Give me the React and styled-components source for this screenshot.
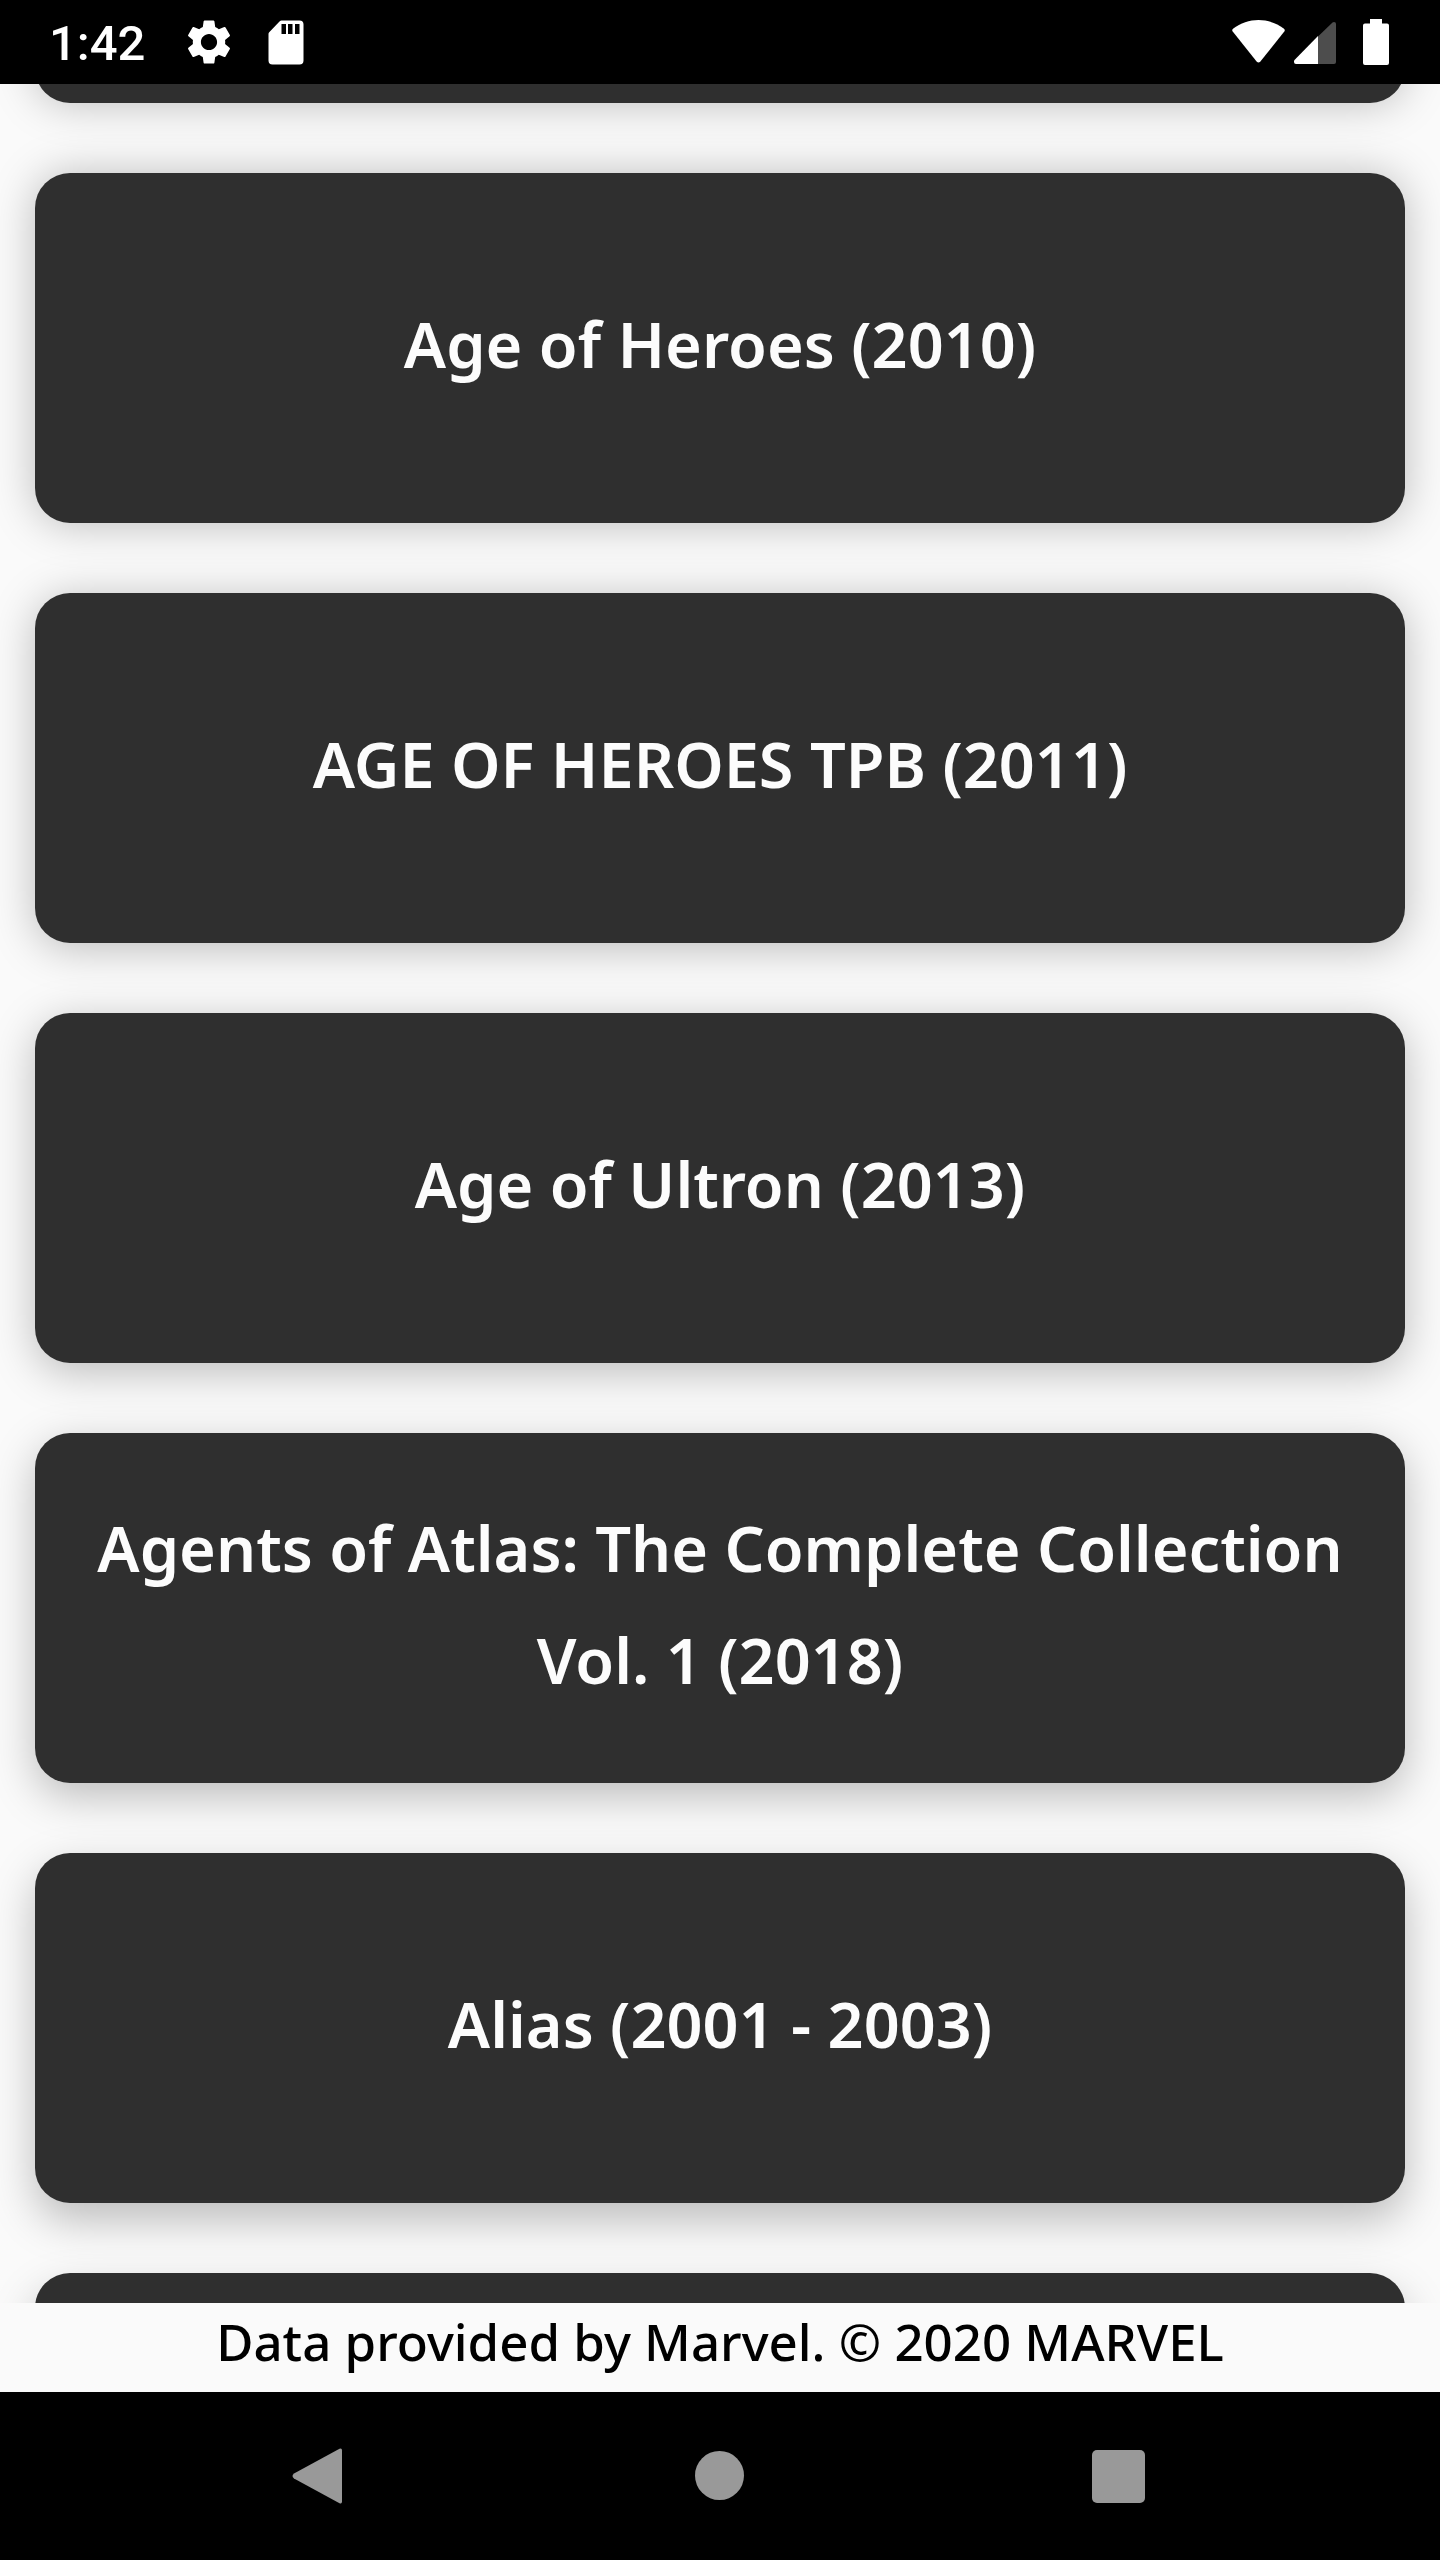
import React, { useLayoutEffect, useRef } from "react";
import styled, { createGlobalStyle } from "styled-components";

const GlobalStyle = createGlobalStyle`
  * { box-sizing: border-box; }
  body { margin: 0; background: #fafafa; }
`;

const Screen = styled.div`
  display: flex;
  flex-direction: column;
  height: 100vh;
  background: #fafafa;
  font-family: "Noto Sans", "Open Sans", sans-serif;
`;

const StatusBar = styled.header`
  display: flex;
  flex: none;
  align-items: center;
  justify-content: space-between;
  height: 84px;
  padding: 0 51px 0 49px;
  background: #000;
  color: #fff;
`;

const StatusGroup = styled.div`
  display: flex;
  align-items: center;
  gap: ${({ $gap }) => $gap}px;
`;

const Clock = styled.time`
  padding-top: 4px;
  font: 500 49px/56px Roboto, sans-serif;
`;

const StatusIcon = styled.svg`
  display: block;
  flex: none;
`;

const SeriesList = styled.ul`
  display: flex;
  flex: 1;
  flex-direction: column;
  gap: 70px;
  min-height: 0;
  margin: 0;
  padding: 35px;
  overflow-y: auto;
  scrollbar-width: none;
  list-style: none;
`;

const SeriesItem = styled.li`
  flex: none;
  height: 350px;
  border-radius: 35px;
  background: #2f2f2f;
  box-shadow: 0 ${({ $depth }) => $depth}px 44px rgba(0, 0, 0, 0.25);
`;

const SeriesButton = styled.button`
  display: flex;
  align-items: center;
  justify-content: center;
  width: 100%;
  height: 100%;
  padding: 0 48px 8px;
  border: 0;
  border-radius: 35px;
  background: none;
  color: #fcfcfc;
  font: inherit;
  font-size: 63px;
  font-weight: 600;
  line-height: 112px;
  text-align: center;
  cursor: pointer;
`;

const Attribution = styled.footer`
  flex: none;
  padding: 0 35px 12px;
  background: #fafafa;
  color: #000;
  font-size: 51px;
  font-weight: 500;
  line-height: 77px;
  text-align: center;
`;

const NavBar = styled.nav`
  display: flex;
  flex: none;
  height: 168px;
  padding: 0 120px;
  background: #000;
`;

const NavButton = styled.button`
  display: flex;
  flex: 1;
  align-items: center;
  justify-content: center;
  padding: 0;
  border: 0;
  background: none;
  cursor: pointer;
`;

const series = [
  { id: 1, depth: 0 },
  { id: 2, depth: 1, title: "Age of Heroes (2010)" },
  { id: 3, depth: 5, title: "AGE OF HEROES TPB (2011)" },
  { id: 4, depth: 9, title: "Age of Ultron (2013)" },
  { id: 5, depth: 13, title: "Agents of Atlas: The Complete Collection Vol. 1 (2018)" },
  { id: 6, depth: 17, title: "Alias (2001 - 2003)" },
  { id: 7, depth: 20 },
];

const SCROLL_OFFSET = 366;

export default function App() {
  const listRef = useRef(null);

  useLayoutEffect(() => {
    listRef.current.scrollTop = SCROLL_OFFSET;
  }, []);

  return (
    <Screen>
      <GlobalStyle />
      <StatusBar>
        <StatusGroup $gap={37}>
          <Clock>1:42</Clock>
          <StatusGroup $gap={28}>
            <StatusIcon width="54" height="54" viewBox="0 0 24 24" fill="#fff" aria-hidden="true">
              <path d="M19.14 12.94c.04-.3.06-.61.06-.94 0-.32-.02-.64-.07-.94l2.03-1.58c.18-.14.23-.41.12-.61l-1.92-3.32c-.12-.22-.37-.29-.59-.22l-2.39.96c-.5-.38-1.03-.7-1.62-.94l-.36-2.54c-.04-.24-.24-.41-.48-.41h-3.84c-.24 0-.43.17-.47.41l-.36 2.54c-.59.24-1.13.57-1.62.94l-2.39-.96c-.22-.08-.47 0-.59.22L2.74 8.87c-.12.21-.08.47.12.61l2.03 1.58c-.05.3-.09.63-.09.94s.02.64.07.94l-2.03 1.58c-.18.14-.23.41-.12.61l1.92 3.32c.12.22.37.29.59.22l2.39-.96c.5.38 1.03.7 1.62.94l.36 2.54c.05.24.24.41.48.41h3.84c.24 0 .44-.17.47-.41l.36-2.54c.59-.24 1.13-.56 1.62-.94l2.39.96c.22.08.47 0 .59-.22l1.92-3.32c.12-.22.07-.47-.12-.61l-2.01-1.58zM12 15.6c-1.98 0-3.6-1.62-3.6-3.6s1.62-3.6 3.6-3.6 3.6 1.62 3.6 3.6-1.62 3.6-3.6 3.6z" />
            </StatusIcon>
            <StatusIcon width="44" height="45" viewBox="0 0 44 45" aria-hidden="true">
              <path fill="#fff" d="M17.5 .5H35.5A4 4 0 0 1 39.5 4.5V40.5A4 4 0 0 1 35.5 44.5H8.500A4 4 0 0 1 4.500 40.500V14Q4.500 13 5.200 12.300L15.500 1.500Q16.500 .5 17.500 .5Z" />
              <path fill="#000" d="M17.500 4H22V14H17.500ZM24 4H28.500V14H24ZM31 4H35.500V14H31Z" />
            </StatusIcon>
          </StatusGroup>
        </StatusGroup>
        <StatusGroup $gap={27}>
          <StatusGroup $gap={9}>
            <StatusIcon width="53" height="44" viewBox="0 0 53 44" aria-hidden="true">
              <path fill="#fff" d="M.7 11.500Q-.4 10 1 8.800C16-2.800 37-2.800 52 8.800Q53.400 10 52.300 11.500L28.200 41.700Q26.500 43.300 24.800 41.700Z" />
            </StatusIcon>
            <StatusIcon width="42" height="46" viewBox="0 0 42 46" aria-hidden="true">
              <path fill="#fff" d="M24 17V45H2Q0 45 0 43V41.500Z" />
              <path fill="#4d4d4d" d="M24 17.500 38.500 3.600Q39.300 3 40 3 42 3 42 5V43Q42 45 40 45H24Z" />
            </StatusIcon>
          </StatusGroup>
          <StatusIcon width="26" height="46" viewBox="0 0 26 46" aria-hidden="true">
            <path fill="#fff" d="M7 0H19V4.500H24Q26 4.500 26 6.500V44Q26 46 24 46H2Q0 46 0 44V6.500Q0 4.500 2 4.500H7Z" />
          </StatusIcon>
        </StatusGroup>
      </StatusBar>

      <SeriesList ref={listRef}>
        {series.map(({ id, title, depth }) => (
          <SeriesItem key={id} $depth={depth}>
            {title && <SeriesButton type="button">{title}</SeriesButton>}
          </SeriesItem>
        ))}
      </SeriesList>

      <Attribution>Data provided by Marvel. © 2020 MARVEL</Attribution>

      <NavBar>
        <NavButton type="button" aria-label="Back">
          <svg width="56" height="56" viewBox="0 0 56 56" aria-hidden="true">
            <path fill="#999" d="M2 25.500 47.500 .7Q50 -.3 50 2.500V53.500Q50 56.300 47.500 55.300L2 30.500Q-1 28 2 25.500Z" />
          </svg>
        </NavButton>
        <NavButton type="button" aria-label="Home">
          <svg width="50" height="50" viewBox="0 0 50 50" aria-hidden="true">
            <circle cx="24.5" cy="24.5" r="24.5" fill="#999" />
          </svg>
        </NavButton>
        <NavButton type="button" aria-label="Overview">
          <svg width="57" height="53" viewBox="0 0 57 53" aria-hidden="true">
            <rect width="53" height="53" rx="5" fill="#999" />
          </svg>
        </NavButton>
      </NavBar>
    </Screen>
  );
}
